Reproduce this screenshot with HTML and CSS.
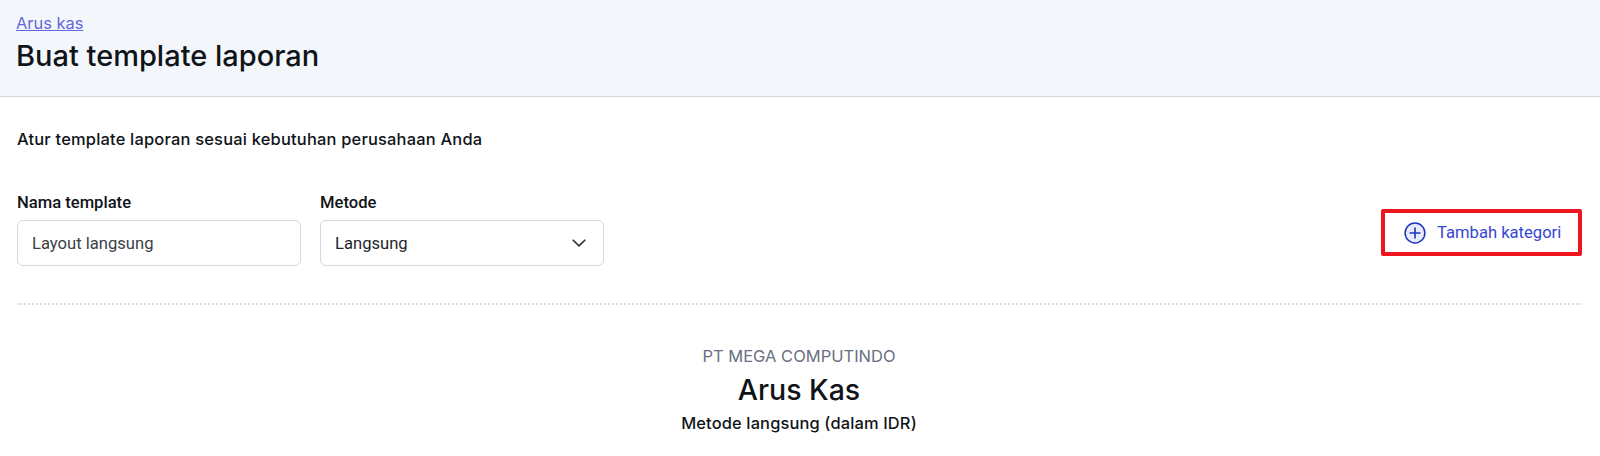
FILE: index.html
```html
<!DOCTYPE html>
<html lang="id">
  <head>
    <meta charset="UTF-8" />
    <meta name="viewport" content="width=device-width, initial-scale=1.0" />
    <title>Buat template laporan</title>
    <link rel="stylesheet" href="styles.css">
  </head>
  <body>
    <header class="page-header">
      <a class="breadcrumb" href="#">Arus kas</a>
      <h1 class="page-title">Buat template laporan</h1>
    </header>
    <main class="content">
      <p class="intro">Atur template laporan sesuai kebutuhan perusahaan Anda</p>
      <div class="toolbar">
        <div class="fields">
          <div class="field">
            <label class="field-label" for="name">Nama template</label>
            <input class="control" type="text" id="name" value="Layout langsung" />
          </div>
          <div class="field">
            <span class="field-label">Metode</span>
            <div class="control select">
              <span>Langsung</span>
              <svg class="chevron" width="16" height="10" viewBox="0 0 16 10" fill="none">
                <path d="M1.7 1.7 L8 7.9 L14.3 1.7" stroke="#2b2f36" stroke-width="1.6" />
              </svg>
            </div>
          </div>
        </div>
        <button class="add-button" type="button">
          <svg class="plus" width="22" height="22" viewBox="0 0 22 22">
            <circle cx="11" cy="11" r="9.9" fill="#e9ebfb" stroke="#1a35c4" stroke-width="1.5" />
            <path d="M5.5 11 H16.5 M11 5.5 V16.5" stroke="#1a35c4" stroke-width="1.6" />
          </svg>
          <span>Tambah kategori</span>
        </button>
      </div>
      <section class="report">
        <p class="company">PT MEGA COMPUTINDO</p>
        <h2 class="report-title">Arus Kas</h2>
        <p class="method">Metode langsung (dalam IDR)</p>
      </section>
    </main>
  </body>
</html>
```
FILE: styles.css
```css
* {
  box-sizing: border-box;
  margin: 0;
  padding: 0;
}

body {
  font-family: Inter, "Liberation Sans", sans-serif;
  font-size: 16px;
  background-color: #fff;
  color: #101419;
}

.page-header {
  display: flex;
  flex-direction: column;
  align-items: flex-start;
  height: 97px;
  padding: 12px 16px 0;
  background-color: #f3f6fb;
  border-bottom: 1px solid #d2d8e0;
}

.breadcrumb {
  font-size: 16.4px;
  line-height: 22px;
  color: #6366dc;
}

.page-title {
  font-size: 29px;
  font-weight: 500;
  line-height: 44px;
}

.content {
  padding: 0 19px 0 17px;
}

.intro {
  padding-top: 30px;
  font-size: 16.45px;
  font-weight: 500;
  line-height: 24px;
  letter-spacing: 0.2px;
}

.toolbar {
  display: flex;
  justify-content: space-between;
  align-items: flex-start;
  height: 154px;
  padding-top: 41px;
  border-bottom: 2px dotted #dcdfe6;
}

.fields {
  display: flex;
  gap: 19px;
}

.field {
  width: 284px;
}

.field-label {
  display: block;
  font-family: Roboto, sans-serif;
  font-size: 16.6px;
  font-weight: 500;
  line-height: 22px;
  margin-bottom: 6px;
}

.control {
  display: block;
  width: 100%;
  height: 46px;
  padding: 0 14px;
  border: 1px solid #d3d9e1;
  border-radius: 6px;
  background-color: #fff;
  font-family: Roboto, sans-serif;
  font-size: 16.6px;
  color: #3b4046;
}

.select {
  display: flex;
  align-items: center;
  justify-content: space-between;
  padding-right: 16px;
  color: #22262b;
}

.add-button {
  display: flex;
  align-items: center;
  gap: 11px;
  width: 201px;
  height: 47px;
  margin: 17px -1px 0 0;
  padding-left: 19px;
  border: 4px solid #ee1420;
  border-radius: 2px;
  background-color: #fff;
  font-family: Roboto, sans-serif;
  font-size: 16.6px;
  color: #3545d6;
}

.report {
  padding-top: 39px;
  text-align: center;
}

.company {
  font-size: 16.5px;
  line-height: 24px;
  color: #697080;
}

.report-title {
  font-size: 28.5px;
  font-weight: 500;
  line-height: 43px;
}

.method {
  font-size: 16.45px;
  font-weight: 500;
  line-height: 24px;
  letter-spacing: 0.14px;
}
```
